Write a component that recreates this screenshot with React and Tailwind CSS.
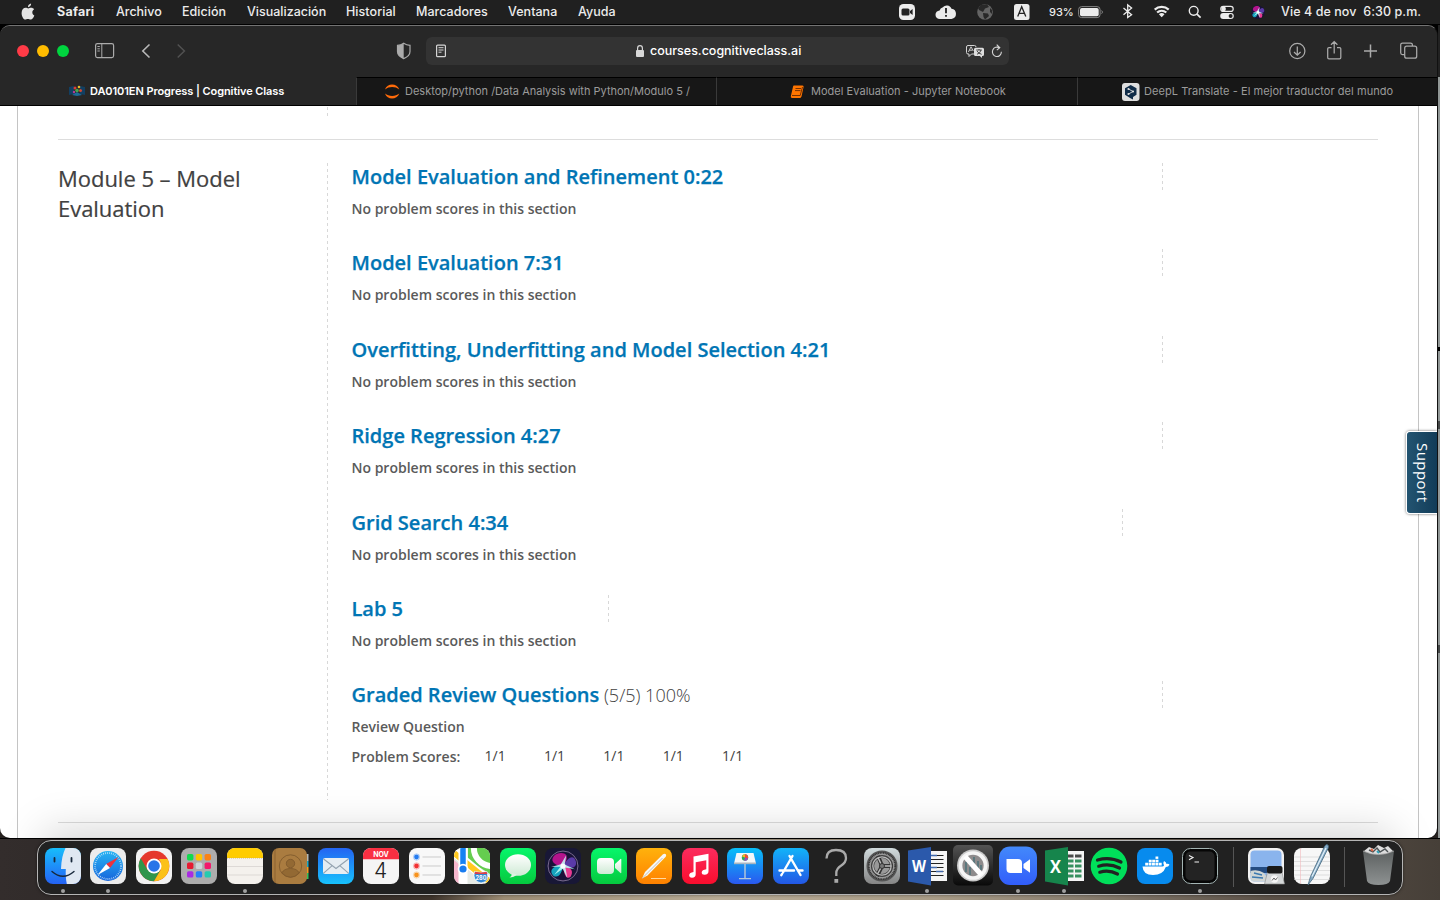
import React from "react";

const UI = "font-['Inter','Liberation_Sans',sans-serif]";
const DASH = "w-px shrink-0 bg-[repeating-linear-gradient(to_bottom,#d8d8d8_0_3px,transparent_3px_6px)]";

const MENU = [
  ["Archivo", "w-[66px] tracking-[-0.02px]"],
  ["Edición", "w-[65px] tracking-[0.02px]"],
  ["Visualización", "w-[99px] tracking-[0px]"],
  ["Historial", "w-[70px] tracking-[0.06px]"],
  ["Marcadores", "w-[92px] tracking-[0.04px]"],
  ["Ventana", "w-[70px] tracking-[0.03px]"],
  ["Ayuda", "w-[60px] tracking-[0px]"],
];

const SiriOrb = () => (
  <g>
    <circle r="13" fill="#191238" />
    <path d="M0 0C-10 0-13-7-6-11C1-14 8-10 0 0Z" fill="#b3148c" />
    <path d="M0 0C5-9 10-11 12-4C13 2 7 3 0 0Z" fill="#5a3aa8" />
    <path d="M0 0C8 1 10 5 7 10C3 13 1 8 0 0Z" fill="#e83a92" />
    <path d="M0 0C-8-1-14 4-9 9C-4 12-1 6 0 0Z" fill="#16a3bd" />
    <path d="M-11 1L-2-1.6L3-10L1.6-1.4L11 3L2.2 1.5L4 11L-.2 2.6L-8 8L-2.4 .6Z" fill="#c2fff8" opacity=".85" />
    <circle r="2.4" fill="#fff" opacity=".9" />
  </g>
);

function MenuBar() {
  return (
    <div className={`${UI} flex h-6 w-full shrink-0 items-center bg-[#202020] text-[12.5px] font-medium text-[#ececec]`}>
      <div className="w-[57px] shrink-0 pl-[21px]">
        <svg width="15" height="18" viewBox="0 0 15 18" fill="#e4e4e4">
          <path d="M10.1 .6C10.2 2.6 8.7 4.2 7 4.3C6.8 2.4 8.4 .8 10.1 .6ZM13.3 12.5C12.7 14.3 11.2 16.5 9.7 16.5C8.6 16.5 8.1 15.9 6.9 15.9C5.6 15.9 5.2 16.5 4.2 16.5C2.5 16.5.6 13.2.6 9.9C.6 6.7 2.6 4.8 4.7 4.8C5.7 4.8 6.5 5.4 7.2 5.4C8 5.4 8.8 4.7 10.2 4.7C11.3 4.7 12.4 5.2 13.1 6.2C10.6 7.6 10.8 11.4 13.4 12.4Z" />
        </svg>
      </div>
      <div className="w-[59px] shrink-0 pt-px font-bold tracking-[0.25px]">Safari</div>
      {MENU.map(([t, c]) => (
        <div key={t} className={`${c} shrink-0 pt-px whitespace-nowrap`}>{t}</div>
      ))}
      <div className="flex-1" />
      <svg width="134" height="24" viewBox="897 0 134 24" className="shrink-0">
        <rect x="899" y="4" width="16" height="16" rx="4.5" fill="#ececec" />
        <rect x="901.5" y="8.5" width="8" height="7" rx="1.5" fill="#222" />
        <path d="M910 11L912.6 9V15L910 13Z" fill="#222" />
        <path d="M940 19A4.3 4.3 0 0 1 939.6 10.4A4.5 4.5 0 0 1 942.5 7.5A5.3 5.3 0 0 1 951.5 8.7A5.2 5.2 0 0 1 951.5 19Z" fill="#ececec" />
        <path d="M946 8V13.2M946 15V16.8" stroke="#222" strokeWidth="1.8" />
        <circle cx="985" cy="12" r="7.8" fill="#646464" />
        <path d="M981 5L987 4.3L989 7L985 8.5L983 12L979 10L978 8ZM983 13L988 13.5L989 16L985 19.4L983.5 17Z M990 8L992 10V14L990 12Z" fill="#282828" />
        <rect x="1014" y="4" width="15.5" height="16" rx="2.5" fill="#ececec" />
        <path d="M1017.7 16.6L1021.7 6.8L1025.8 16.6M1019 13.4H1024.4" stroke="#222" strokeWidth="1.3" fill="none" />
      </svg>
      <div className="w-[47px] shrink-0 pt-px pl-[18px] text-[11px] tracking-[0px]">93%</div>
      <svg width="188" height="24" viewBox="1078 0 188 24" className="shrink-0" fill="none" stroke="#ececec">
        <rect x="1078.6" y="6.6" width="21.5" height="11" rx="3" stroke="#858585" />
        <rect x="1080" y="8" width="18.7" height="8.2" rx="1.8" fill="#ececec" stroke="none" />
        <path d="M1101.6 10.5Q1103.5 12 1101.6 13.7" stroke="#858585" />
        <path d="M1123.5 8L1131.6 14.7L1127.7 17.5V4.9L1131.6 8L1123.5 14.8" strokeWidth="1.3" />
        <path d="M1154.7 9.6A10.3 10.3 0 0 1 1168.7 9.6M1157.1 12.5A7 7 0 0 1 1166.3 12.5" strokeWidth="2.2" />
        <path d="M1158.9 14.3A4.3 4.3 0 0 1 1164.5 14.3L1161.7 17.3Z" fill="#ececec" stroke="none" />
        <circle cx="1193.7" cy="10.8" r="4.4" strokeWidth="1.4" />
        <path d="M1197 14.1L1200.6 17.7" strokeWidth="1.7" />
        <rect x="1220.8" y="6.4" width="12.4" height="5" rx="2.5" strokeWidth="1.2" />
        <rect x="1220.2" y="13" width="13.6" height="6" rx="3" fill="#ececec" stroke="none" />
        <circle cx="1223.6" cy="8.9" r="2.3" fill="#ececec" stroke="none" />
        <circle cx="1230.6" cy="16" r="2" fill="#222" stroke="none" />
        <g transform="translate(1258 12.2) scale(.52)" stroke="none"><SiriOrb /></g>
      </svg>
      <div className="w-[174px] shrink-0 pl-[15px] whitespace-pre tracking-[0.07px]">Vie 4 de nov  6:30 p.m.</div>
    </div>
  );
}

function Toolbar() {
  return (
    <div className="flex h-[51px] shrink-0 items-center bg-[#272727]">
      <svg width="426" height="50" viewBox="0 0 426 50" fill="none" className="-mt-px shrink-0">
        <circle cx="23" cy="25" r="6" fill="#ff3b47" />
        <circle cx="43" cy="25" r="6" fill="#ffbc00" />
        <circle cx="63" cy="25" r="6" fill="#00d53f" />
        <rect x="95.6" y="17.6" width="18" height="14" rx="1.8" stroke="#ababab" strokeWidth="1.2" />
        <path d="M101.8 18V31M97.4 20.5H99.8M97.4 22.8H99.8M97.4 25H99.8" stroke="#ababab" />
        <path d="M149.5 18.5L142.8 25L149.5 31.5" stroke="#b8b8b8" strokeWidth="1.6" />
        <path d="M177.7 18.5L184.4 25L177.7 31.5" stroke="#515151" strokeWidth="1.5" />
        <path d="M403.7 17.3C401.5 18.8 399.6 19.3 397.5 19.4V25.5C397.5 29 400 31 403.7 32.6C407.5 31 410 29 410 25.5V19.4C407.8 19.3 405.9 18.8 403.7 17.3Z" stroke="#ababab" strokeWidth="1.2" />
        <path d="M403.7 17.3C401.5 18.8 399.6 19.3 397.5 19.4V25.5C397.5 29 400 31 403.7 32.6Z" fill="#ababab" />
      </svg>
      <div className="-mt-px flex h-7 w-[583px] shrink-0 items-center rounded-md bg-[#333333]">
        <svg width="209" height="28" viewBox="426 0 209 28" fill="none" stroke="#d4d4d4">
          <rect x="436.6" y="8.1" width="8.8" height="11.6" rx="1" strokeWidth="1.2" />
          <path d="M438.5 10.7H443.5M438.5 13H443.5M438.5 15.2H441.5" />
        </svg>
        <svg width="15" height="28" viewBox="0 0 15 28" fill="none">
          <rect x="1" y="13" width="8" height="7" rx="1" fill="#d8d8d8" />
          <path d="M2.6 13V11.3A2.4 2.6 0 0 1 7.4 11.3V13" stroke="#d8d8d8" strokeWidth="1.2" />
        </svg>
        <div className={`${UI} w-[315px] pt-px text-[12.5px] font-medium tracking-[-0.01px] text-white`}>courses.cognitiveclass.ai</div>
        <svg width="40" height="28" viewBox="965 0 40 28" fill="none" stroke="#d4d4d4">
          <path d="M974.5 17H971.5L969 19.5V17H968Q966.5 17 966.5 15.5V10Q966.5 8.5 968 8.5H974.5Q976 8.5 976 10" />
          <path d="M968.4 15L971 9.8L973.3 14M969.3 13.2H972.3" strokeWidth=".9" />
          <path d="M975.5 10.8H982.5Q984 10.8 984 12.3V17.5Q984 19 982.5 19H982V21L979.8 19H975.5Q974 19 974 17.5V12.3Q974 10.8 975.5 10.8Z" fill="#dedede" stroke="none" />
          <path d="M976.2 13H981.8M979 12V13M977 17.3Q980.5 16 981 13M977 14Q978.5 16.5 981.6 17.3" stroke="#333" strokeWidth=".9" />
          <path d="M999.5 11A4.5 4.7 0 1 0 1001.4 14.8M996.7 7.7L999.8 10.8L996.8 13.1" strokeWidth="1.1" />
        </svg>
      </div>
      <div className="flex-1" />
      <svg width="152" height="50" viewBox="1285 0 152 50" fill="none" stroke="#ababab" strokeWidth="1.25" className="-mt-px shrink-0">
        <circle cx="1297.3" cy="25" r="7.6" />
        <path d="M1297.3 20.5V29M1294 26L1297.3 29.2L1300.6 26" />
        <path d="M1331.5 21.5H1329Q1327.7 21.5 1327.7 22.8V31.5Q1327.7 32.8 1329 32.8H1339.5Q1340.8 32.8 1340.8 31.5V22.8Q1340.8 21.5 1339.5 21.5H1337M1334.2 27.5V15.8M1331 18.8L1334.2 15.6L1337.4 18.8" />
        <path d="M1364 25H1377M1370.5 18.5V31.5" strokeWidth="1.5" />
        <rect x="1404.7" y="20.2" width="12" height="12" rx="2" />
        <path d="M1404.5 28.5H1402.5Q1400.7 28.5 1400.7 26.7V18.8Q1400.7 17 1402.5 17H1410.5Q1412.4 17 1412.4 18.8V20" />
      </svg>
    </div>
  );
}

function Tabs() {
  const tab = "flex h-full shrink-0 items-center border-t border-l border-t-black border-l-[#3a3a3a] bg-[#171717] text-[#9b9b9b]";
  return (
    <div className={`${UI} flex h-[29px] shrink-0 border-b border-black text-[11px]`}>
      <div className="flex h-full w-[356px] shrink-0 items-center bg-[#272727] pl-[69px] font-semibold text-white">
        <svg width="21" height="14" viewBox="0 0 21 14" className="shrink-0">
          <path d="M0 3L5 2V10L0 11ZM11 2L16 3V11L11 10Z" fill="#123f62" />
          <path d="M3 11L8 8L13 11L8 12Z" fill="#1d6c98" />
          <circle cx="6" cy="4" r="1.5" fill="#dc3c35" /><circle cx="10" cy="3" r="1.3" fill="#e8bb25" /><circle cx="8" cy="6.5" r="1.8" fill="#47a34c" /><circle cx="11.5" cy="6.5" r="1.5" fill="#d34731" /><circle cx="5" cy="8" r="1.2" fill="#b93c93" />
        </svg>
        <span className="whitespace-nowrap tracking-[-0.08px]">DA0101EN Progress | Cognitive Class</span>
      </div>
      <div className={`${tab} w-[360px] pl-[27px]`}>
        <svg width="21" height="18" viewBox="0 0 21 18" fill="#ff6b0a" className="shrink-0">
          <path d="M1 6.5C3 .2 13-.2 15.3 6.5C11.5 3.2 4.8 3.2 1 6.5ZM1 10.5C4.8 13.8 11.5 13.8 15.3 10.5C13 17.2 3 17.2 1 10.5Z" />
        </svg>
        <span className="whitespace-nowrap tracking-[0px]">Desktop/python /Data Analysis with Python/Modulo 5 /</span>
      </div>
      <div className={`${tab} w-[361px] pl-[73px]`}>
        <svg width="21" height="16" viewBox="0 0 21 16" className="shrink-0">
          <path d="M4 1.5H12.5Q14 1.5 13.5 3.2L11.5 12.5Q11 14 9.5 14H2.2Q.4 14 .8 12.2L3 2.8Q3.2 1.5 4 1.5Z" fill="#ff7500" />
          <path d="M5.5 4.5H11M5 6.6H10.5M2 11.5H10.2L12.5 3" stroke="#542000" strokeWidth=".8" fill="none" />
        </svg>
        <span className="whitespace-nowrap tracking-[0.03px]">Model Evaluation - Jupyter Notebook</span>
      </div>
      <div className={`${tab} w-[360px] pl-[44px]`}>
        <svg width="22" height="18" viewBox="0 0 22 18" className="shrink-0">
          <rect x="0" y="0" width="17.5" height="18" rx="3" fill="#dedede" />
          <path d="M8.7 2L14.5 5.2V11.8L11 13.9V16.5L8.5 15.2L3 11.8V5.2Z" fill="#102c48" />
          <path d="M6.5 6L11 8.5L6.5 11" stroke="#dedede" fill="none" strokeWidth=".9" />
          <circle cx="6.5" cy="6" r="1.1" fill="#dedede" /><circle cx="11" cy="8.5" r="1.1" fill="#dedede" /><circle cx="6.5" cy="11" r="1.1" fill="#dedede" />
        </svg>
        <span className="whitespace-nowrap tracking-[0.06px]">DeepL Translate - El mejor traductor del mundo</span>
      </div>
    </div>
  );
}

const SECTIONS = [
  ["Model Evaluation and Refinement 0:22", "w-[810.5px]"],
  ["Model Evaluation 7:31", "w-[810.5px]"],
  ["Overfitting, Underfitting and Model Selection 4:21", "w-[810.5px]"],
  ["Ridge Regression 4:27", "w-[810.5px]"],
  ["Grid Search 4:34", "w-[770.5px]"],
  ["Lab 5", "w-[256.5px]"],
  ["Graded Review Questions", "w-[810.5px]"],
];

function Content() {
  return (
    <div className="flex min-h-0 flex-1 bg-white pr-[18px] pl-[17px] font-['Open_Sans','Noto_Sans',sans-serif]">
      <div className="flex flex-1 flex-col border-x border-[#c4c4c4] px-10">
        <div className="h-[34px] border-b border-[#dddddd] pt-px pl-[269px]"><div className={`${DASH} h-[9px]`} /></div>
        <div className="mt-[23px] flex h-[637px]">
          <h2 className="w-[269px] shrink-0 pr-16 text-[22px] leading-[30px] tracking-[-0.03px] text-[#414141] [-webkit-text-stroke:0.2px]">Module 5 – Model Evaluation</h2>
          <div className={`${DASH} h-full`} />
          <div className="flex flex-col pl-[23.5px]">
            {SECTIONS.map(([title, w], i) => (
              <div key={title} className="h-[86.4px]">
                <div className="flex h-7">
                  <h3 className={`${w} shrink-0 text-[20px] leading-[27px] font-semibold whitespace-nowrap text-[#0075b4] [-webkit-text-stroke:0.25px]`}>
                    {title}
                    {i === 6 && <span className="text-[18px] font-light text-[#414141] [-webkit-text-stroke:0px]"> (5/5) 100%</span>}
                  </h3>
                  <div className={`${DASH} h-7`} />
                </div>
                <p className="mt-[8px] text-[14px] leading-5 font-semibold text-[#5a5a5a]">
                  {i === 6 ? "Review Question" : "No problem scores in this section"}
                </p>
                {i === 6 && (
                  <div className="mt-2.5 flex text-[14px] leading-5">
                    <span className="w-[133px] font-semibold text-[#5a5a5a]">Problem Scores:</span>
                    {[0, 1, 2, 3, 4].map((n) => <span key={n} className="-mt-px w-[59.4px] text-[#414141]">1/1</span>)}
                  </div>
                )}
              </div>
            ))}
          </div>
        </div>
        <div className="mt-[22px] h-px shrink-0 bg-[#dddddd]" />
      </div>
    </div>
  );
}

const Tile = ({ fill, children }) => (
  <g><rect width="36" height="36" rx="8" fill={fill} />{children}</g>
);

const ICONS = [
  { n: "finder", dot: 1, a: <Tile fill="url(#finder)">
    <path d="M20.5 0H28A8 8 0 0 1 36 8V28A8 8 0 0 1 28 36H21.8C20.8 31 20.6 26 20.8 21H16C16.3 12 18 5 20.5 0Z" fill="#dfe8f2" />
    <path d="M9.5 10V13.5M26.5 10V13.5" stroke="#17283b" strokeWidth="1.8" strokeLinecap="round" /><path d="M7 23.5Q18 33 29 23.5" stroke="#17283b" strokeWidth="1.4" fill="none" strokeLinecap="round" /></Tile> },
  { n: "safari", dot: 1, a: <Tile fill="#ececec">
    <circle cx="18" cy="18" r="15" fill="url(#saf)" /><circle cx="18" cy="18" r="13" fill="none" stroke="#cce9fb" strokeWidth="1.8" strokeDasharray=".7 1.3" />
    <path d="M28.5 9L16.2 16L20 20Z" fill="#f0323c" /><path d="M7.5 27L16.2 16L20 20Z" fill="#fff" /></Tile> },
  { n: "chrome", a: <Tile fill="#f2f2f2">
    <circle cx="18" cy="18" r="15.3" fill="#e5382c" /><path d="M4.8 10.3A15.3 15.3 0 0 0 18 33.3L24.6 21.8L18 25.6L11.4 21.8Z" fill="#30964b" /><path d="M31.6 11A15.3 15.3 0 0 1 18 33.3L24.8 21.7L25 15L23 11Z" fill="#fbc118" />
    <circle cx="18" cy="18" r="7.5" fill="#fff" /><circle cx="18" cy="18" r="5.8" fill="#2874e8" /></Tile> },
  { n: "launchpad", a: <Tile fill="#adadad">
    {["#12d94e", "#ffc400", "#f98216", "#e61a31", "#cdd6d9", "#f3196c", "#a92be3", "#2481fa", "#25cbb0"].map((c, i) => (
      <rect key={c} x={6 + (i % 3) * 8.8} y={6 + Math.floor(i / 3) * 8.6} width="6.4" height="6.4" rx="1.6" fill={c} />))}</Tile> },
  { n: "notes", dot: 1, a: <Tile fill="#f4f1ed">
    <path d="M0 10V8A8 8 0 0 1 8 0H28A8 8 0 0 1 36 8V10Z" fill="#ffcc00" /><path d="M0 10.2H36" stroke="#b69c55" strokeWidth=".5" strokeDasharray="1 1" /><path d="M0 18.5H36M0 27H36" stroke="#d2cfcc" strokeWidth=".7" /></Tile> },
  { n: "contacts", a: <g>
    <path d="M33 6H36.5V13H33Z" fill="#b5b9b7" /><path d="M33 13H36.5V19H33Z" fill="#18a9c7" /><path d="M33 19H36.5V25H33Z" fill="#f69c1d" /><path d="M33 25H36.5V31H33Z" fill="#35c35a" />
    <rect width="35" height="36" rx="7" fill="#aa7c40" /><path d="M3 1V35" stroke="#825a2b" strokeWidth=".7" />
    <g stroke="#805a2c" fill="none" strokeWidth=".9"><circle cx="18.5" cy="18" r="11.2" /><path d="M9.8 25Q12 20.5 18.5 20.5Q25 20.5 27.2 25Q23 29.2 18.5 29.2Q14 29.2 9.8 25Z" fill="#936933" /><circle cx="18.5" cy="15.5" r="4.2" fill="#936933" /></g></g> },
  { n: "mail", a: <Tile fill="url(#mail)">
    <rect x="5" y="10" width="26" height="16" rx="2" fill="#e6edf2" /><path d="M5.6 11L18 20.5L30.4 11M5.6 25.2L14.2 17.7M30.4 25.2L21.8 17.7" stroke="#94a3b0" strokeWidth="1.1" fill="none" /></Tile> },
  { n: "calendar", a: <Tile fill="#f5f5f5">
    <path d="M0 11.2V8A8 8 0 0 1 8 0H28A8 8 0 0 1 36 8V11.2Z" fill="#f92f42" />
    <text x="18" y="8.8" textAnchor="middle" fontFamily="Inter, sans-serif" fontSize="7" fontWeight="700" fill="#fff">NOV</text>
    <text x="17.5" y="30" textAnchor="middle" fontFamily="Inter, sans-serif" fontSize="21" fontWeight="300" fill="#222">4</text></Tile> },
  { n: "reminders", a: <Tile fill="#f8f8f8">
    {["#247cf1", "#f23132", "#f7931e"].map((c, i) => (
      <g key={c}><circle cx="7.5" cy={9 + i * 9} r="2.4" fill={c} /><circle cx="7.5" cy={9 + i * 9} r="3.2" fill="none" stroke={c} strokeOpacity=".4" strokeWidth=".8" /><path d={`M13.5 ${9 + i * 9}H32`} stroke="#cbcbcb" strokeWidth="1" /></g>))}</Tile> },
  { n: "maps", a: <g clipPath="url(#tile)">
    <rect width="36" height="36" fill="#e7eae5" /><path d="M14 0H36V26L14 12Z" fill="#65cd4f" /><path d="M20-2A18 18 0 0 0 38 18" stroke="#fff" strokeWidth="6" fill="none" /><path d="M26-2A12 12 0 0 0 38 10" stroke="#65cd4f" strokeWidth="5" fill="none" />
    <path d="M0 4L36 34" stroke="#fff" strokeWidth="9" /><path d="M0 5L36 34" stroke="#ffc91f" strokeWidth="6" /><path d="M0 12L7 18V36H0Z" fill="#f6b6cd" /><path d="M9 0V36" stroke="#fff" strokeWidth="9" /><path d="M9 0V22" stroke="#1582f4" strokeWidth="5.5" />
    <circle cx="9" cy="21" r="5.3" fill="#fff" /><circle cx="9" cy="21" r="3.6" fill="#187cf0" /><path d="M20.5 23.5Q27 25.5 33 23.5Q36 34 27 35Q18 33 20.5 23.5Z" fill="#3286d2" stroke="#fff" strokeWidth=".7" /><path d="M20.5 26L21.3 23.8Q27 25 32.4 23.8L33.4 26Z" fill="#df4049" />
    <text x="27" y="31.5" textAnchor="middle" fontFamily="Inter, sans-serif" fontSize="5.5" fontWeight="700" fill="#fff">280</text></g> },
  { n: "messages", a: <Tile fill="url(#green)"><ellipse cx="18" cy="17" rx="13" ry="10.8" fill="url(#white)" /><path d="M12 25Q12 28 9.5 29.5Q14 29.5 17 26.5Z" fill="#dff3e3" /></Tile> },
  { n: "siri", a: <Tile fill="#181736"><circle cx="18" cy="18" r="15" fill="#34254a" stroke="#9386aa" strokeWidth=".7" /><g transform="translate(18 18) scale(1.08)"><SiriOrb /></g></Tile> },
  { n: "facetime", a: <Tile fill="url(#green)"><rect x="6" y="10" width="17" height="16" rx="4" fill="url(#white)" /><path d="M24 16L29.5 11Q30.3 10.5 30.3 11.5V24.5Q30.3 25.5 29.5 25L24 20Z" fill="url(#white)" /></Tile> },
  { n: "pages", a: <Tile fill="url(#orange)"><path d="M6 30.5L9 24L27 6.2Q29 5.3 30 6.5Q30.5 8 29.5 9L11.5 27.5Z" fill="#f6f6f4" /><path d="M6 30.5L26.5 10" stroke="#aaa59c" strokeWidth=".7" /><path d="M15 30.5H30" stroke="#ffe2b1" strokeWidth=".9" /></Tile> },
  { n: "music", a: <Tile fill="url(#red)"><path d="M11.5 8.5L26.5 5.7V23.3Q26.5 26.7 22.5 26.8Q19.6 26.8 19.7 24.3Q19.9 21.9 24.3 21.3V12.3L13.7 14.3V26.2Q13.7 29.6 10 29.7Q7 29.6 7.2 27.1Q7.4 24.6 11.5 24Z" fill="#fff" /></Tile> },
  { n: "keynote", a: <Tile fill="url(#keynote)"><path d="M9.5 5H26.5L29 15.5H7Z" fill="#f5f7f9" /><path d="M7 14.5H29V16.2H7Z" fill="#aab6c1" /><path d="M18 16V30M12 30.6H24" stroke="#b8c9d9" strokeWidth="1.4" /><circle cx="18" cy="9.5" r="3.2" fill="#26ad5c" /><path d="M18 9.5V6.3A3.2 3.2 0 0 1 21 10.5Z" fill="#f34838" /><path d="M18 9.5L21 10.5A3.2 3.2 0 0 1 17 12.5Z" fill="#a343be" /><path d="M18 9.5V6.3A3.2 3.2 0 0 0 15 8.5Z" fill="#f9b421" /></Tile> },
  { n: "appstore", a: <Tile fill="url(#store)"><path d="M19.5 8L10 24.5M16.5 8L27.5 27M6.5 22.5H21M25.5 22.5H29.5M9 26L8.3 27.2" stroke="#fff" strokeWidth="2.4" strokeLinecap="round" fill="none" /></Tile> },
  { n: "unknown", a: <g><path d="M8.5 10.5Q8.5 2 18 2Q28 2 28 10Q28 14.5 23.3 17.5Q18.3 20.7 18.3 25V28" stroke="#aaa" strokeWidth="2.3" fill="none" /><rect x="16.4" y="31" width="3.8" height="3.8" fill="#aaa" /></g> },
  { n: "settings", a: <Tile fill="url(#gray)"><circle cx="18" cy="18" r="15.5" fill="#555" /><circle cx="18" cy="18" r="13.2" fill="#999" stroke="#333" strokeWidth="1.8" strokeDasharray="1 .7" /><circle cx="18" cy="18" r="9.5" fill="none" stroke="#414141" strokeWidth="3.2" /><path d="M18 18L14 8M18 18L28.5 18M18 18L13 28" stroke="#333" strokeWidth="4" /><circle cx="18" cy="18" r="9.2" fill="none" stroke="#b9b9b9" strokeWidth="1.3" /><path d="M18 18L14 9.5M18 18L27 18M18 18L13.5 26" stroke="#bbb" strokeWidth="1.5" /><circle cx="18" cy="18" r="2.5" fill="#777" stroke="#333" /></Tile> },
  { n: "word", dot: 1, a: <g><rect x="17" y="3" width="21" height="30" fill="#f5f5f5" /><path d="M22 7.5H34.5M22 11.5H34.5M22 15.5H34.5M22 19.5H34.5M22 23.5H34.5M22 27.5H34.5" stroke="#222" strokeWidth="1.2" /><path d="M22 7.5H28M22 19.5H28M27 23.5H34" stroke="#4269ac" strokeWidth="1.5" /><path d="M-1 2.5L22-1V37.5L-1 33.5Z" fill="#2b59ab" /><text x="10" y="24" textAnchor="middle" fontFamily="Open Sans, sans-serif" fontSize="15.5" fontWeight="700" textLength="14" lengthAdjust="spacingAndGlyphs" fill="#fff">W</text></g> },
  { n: "blocked", a: <g><rect x="-2" y="-3" width="40" height="40.5" rx="5" fill="url(#black)" /><circle cx="18" cy="17.5" r="16" fill="#c9c9c9" /><circle cx="18" cy="17.5" r="12.5" fill="#8e8b8c" stroke="#f5f5f5" strokeWidth="3.7" /><path d="M11 14V24M15 19V27M19 9V16M23 13V23M26 17V22" stroke="#57767c" strokeWidth="1.8" /><path d="M10 8.5L26.5 27" stroke="#fff" strokeWidth="5" /></g> },
  { n: "zoom", dot: 1, a: <g><rect x="-1" y="-1.5" width="38" height="38.5" rx="11" fill="url(#zoom)" /><path d="M6.5 11H18Q22 11 22 15V25H10.5Q6.5 25 6.5 21ZM23.5 16L30 11.3V24.7L23.5 20Z" fill="#fff" /></g> },
  { n: "excel", dot: 1, a: <g><rect x="17" y="3" width="21" height="30" fill="#f5f5f5" />
    {[0, 1, 2, 3, 4].map((r) => <path key={r} d={`M21 ${8 + r * 5}H27.5M29 ${8 + r * 5}H35.5`} stroke={r === 0 ? "#4a4a4a" : "#36905f"} strokeWidth="3" />)}
    <path d="M-1 2.5L22-1V37.5L-1 33.5Z" fill="#16854c" /><text x="9.5" y="24.5" textAnchor="middle" fontFamily="Open Sans, sans-serif" fontSize="18" fontWeight="700" textLength="11" lengthAdjust="spacingAndGlyphs" fill="#fff">X</text></g> },
  { n: "spotify", a: <g><circle cx="18" cy="18" r="18.3" fill="#00df5a" /><path d="M6.5 12Q19 8.5 30 14M7.7 18.2Q18.5 15 28.5 20M8.8 24.2Q18 21.5 26.5 26" stroke="#222" fill="none" strokeWidth="3.2" strokeLinecap="round" /></g> },
  { n: "docker", a: <Tile fill="#078bee"><path d="M5.5 18.5H25.5Q26.5 18.5 27 17.5Q25.5 15 27 13Q29.2 14 29.5 16Q31.5 15.5 32.5 16.7Q31.5 19 28.8 19Q26 27 16 27Q6 27 5.5 18.5Z" fill="#fff" /><path d="M8.2 16.2H24.8M11.8 13H21.5" stroke="#fff" strokeWidth="2.7" strokeDasharray="2.9 .5" /><path d="M18.5 9.7H21.3" stroke="#fff" strokeWidth="2.4" /></Tile> },
  { n: "terminal", dot: 1, a: <g><rect x=".5" y=".5" width="35" height="35" rx="8" fill="#060606" stroke="#a4b5b4" /><rect x="3.5" y="3.5" width="29" height="29" rx="5" fill="#232323" /><path d="M7 7.5L11 9.5L7 11.7M12.5 14H17" stroke="#f3f3f3" strokeWidth="1.1" fill="none" /></g> },
  { n: "sep1", sep: 1 },
  { n: "preview", a: <g><rect width="36" height="36" rx="7" fill="#f2f2f2" /><rect x="2.5" y="2.5" width="31" height="31" rx="4" fill="#8ab4ed" /><path d="M2.5 19H33.5V25H2.5Z" fill="#244c82" /><path d="M2.5 23Q10 21 16 25L22 33.5H6.5Q2.5 33.5 2.5 29Z" fill="#cfd5d4" /><path d="M6 25L14 27M4 29L15 30" stroke="#3b79b0" strokeWidth="1.3" />
    <path d="M19.5 24L16.5 36H36.5L34 24Z" fill="#d4d7d8" stroke="#888" strokeWidth=".6" /><rect x="19" y="18" width="15.5" height="7.5" rx="2" fill="#191919" /><circle cx="26.5" cy="31" r="3.7" fill="#f5f5f5" /><path d="M24 32.5L26 30L27.5 32L29.5 29.5" stroke="#444" strokeWidth=".8" fill="none" /></g> },
  { n: "textedit", a: <Tile fill="#f7f7f7"><path d="M0 9H36M0 13.5H36M0 18H36M0 22.5H36M0 27H36M0 31.5H36" stroke="#cfcfcf" strokeWidth=".6" /><path d="M6.5 0V36" stroke="#f2b8bc" strokeWidth=".6" /><path d="M14 37L16.5 28.5L30.5-1.5Q32-4.5 34-3Q35-2 34 .5L19 30.5Z" fill="#84a9c5" stroke="#47697f" strokeWidth=".8" /><path d="M18 28.5L32 0" stroke="#e4f2fa" strokeWidth="1.2" /></Tile> },
  { n: "sep2", sep: 1 },
  { n: "trash", a: <g><path d="M4 3L9-1L14 1L18-3L24 0L28-2L33 3L27 7H9Z" fill="#dedede" /><path d="M9 2L13 4L17 0L20 4L25 1L28 4" stroke="#4d5356" strokeWidth="1.4" fill="none" /><path d="M11 1L13 3" stroke="#dd6340" strokeWidth="2" /><path d="M17 3L19 5" stroke="#2c9fb6" strokeWidth="2" /><path d="M3 3Q18 10 34 3L30 33Q28.5 37 18.5 37Q8.5 37 7 33Z" fill="url(#trash)" /><path d="M3 3Q18 10 34 3" stroke="#aaa" strokeWidth=".8" fill="none" /></g> },
];

const GRADS = [
  ["finder", "#17bdfb", "#2463f5"], ["saf", "#28b4f3", "#1765dc"], ["mail", "#2464f2", "#17c2fd"], ["green", "#07f66b", "#05c93e"],
  ["white", "#ffffff", "#cfead5"], ["orange", "#ffb20c", "#ff8100"], ["red", "#fb2c5e", "#fa0d2d"], ["keynote", "#08bff9", "#2a58ef"],
  ["store", "#12b4f9", "#2357e6"], ["gray", "#d1dbdd", "#858585"], ["black", "#545454", "#090909"], ["zoom", "#4389fb", "#315dfa"], ["trash", "#5d6161", "#8e9292"],
];

function Dock() {
  return (
    <div className="relative z-10 flex h-[62px] shrink-0 justify-center border-t border-black bg-[linear-gradient(90deg,#332d2c_0%,#2a2525_18%,#3d332b_30%,#9c8c74_35%,#b7aa94_50%,#a89b86_65%,#8c8172_74%,#5b5148_88%,#463f38_100%)] pt-px">
      <svg width="0" height="0" className="absolute">
        <defs>
          {GRADS.map(([id, a, b]) => (
            <linearGradient key={id} id={id} x1="0" y1="0" x2="0" y2="1"><stop stopColor={a} /><stop offset="1" stopColor={b} /></linearGradient>
          ))}
          <clipPath id="tile"><rect width="36" height="36" rx="8" /></clipPath>
        </defs>
      </svg>
      <div className="flex h-[55px] w-[1366px] rounded-[14px] border border-[#b5b5b5] bg-[#212121] pl-[2px] shadow-[0_0_3px_rgba(0,0,0,0.5)]">
        {ICONS.map((ic) =>
          ic.sep ? (
            <div key={ic.n} className="flex w-[20.6px] shrink-0 justify-center pt-[6px]"><div className="h-10 w-px bg-[#555]" /></div>
          ) : (
            <div key={ic.n} className="flex w-[45.5px] shrink-0 flex-col items-center pt-[7px]">
              <svg width="36" height="36" viewBox="0 0 36 36" className="shrink-0 overflow-visible">{ic.a}</svg>
              {ic.dot && <div className="mt-[5px] size-1 rounded-full bg-[#a0a0a0]" />}
            </div>
          )
        )}
      </div>
    </div>
  );
}

export default function App() {
  return (
    <div className="flex h-[900px] w-[1440px] flex-col overflow-hidden bg-black">
      <MenuBar />
      <div className="flex h-[814px] shrink-0 bg-[linear-gradient(#000_50%,#26211f_50%)] pt-px">
        <div className="relative flex h-[813px] w-[1438px] shrink-0 flex-col overflow-hidden rounded-[10px] border-t border-r border-t-[#737373] border-r-[#111] bg-[#272727]">
          <Toolbar />
          <Tabs />
          <Content />
          <div className="absolute top-full right-[50px] left-[50px] h-10 shadow-[0_0_44px_6px_rgba(0,0,0,0.18)]" />
          <div className="absolute top-[405px] right-0 flex h-[83px] w-[31px] items-center justify-center rounded-l-[4px] border border-r-0 border-white bg-[linear-gradient(90deg,#235471,#123c58)] pl-px shadow-[0_0_3px_rgba(0,0,0,0.6)]">
            <span className="font-['Open_Sans',sans-serif] text-[15px] tracking-[0.45px] text-white [writing-mode:vertical-rl]">Support</span>
          </div>
        </div>
        <div className="flex w-0.5 flex-col bg-[linear-gradient(#222_0_52px,#929897_52px)] pt-[322px]">
          <div className="h-1 bg-black" />
          <div className="mt-[70px] h-2 bg-[#454848]" />
          <div className="mt-[216px] h-2 bg-[#454848]" />
        </div>
      </div>
      <Dock />
    </div>
  );
}
